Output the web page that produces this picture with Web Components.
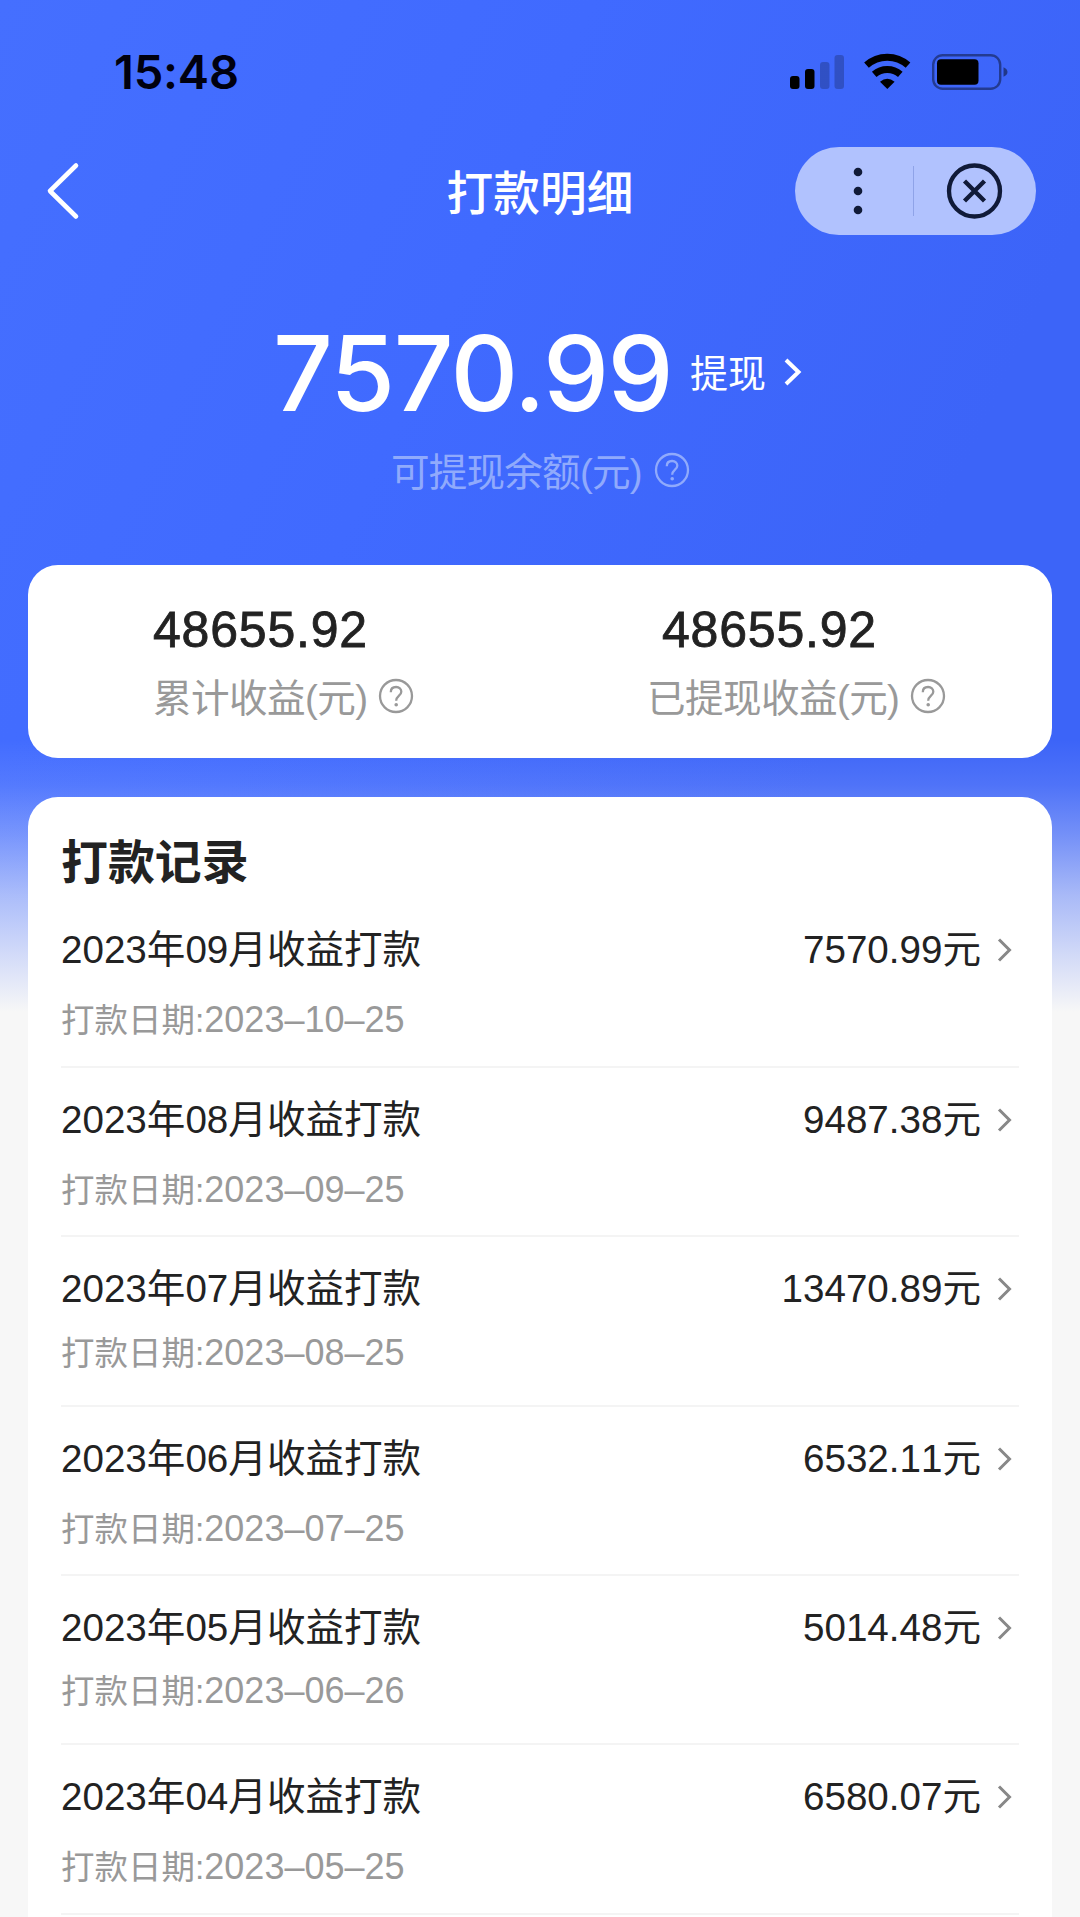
<!DOCTYPE html>
<html lang="zh-CN">
<head>
<meta charset="UTF-8">
<title>打款明细</title>
<style>
    body{
        margin: 0;
        width: 1080px;
        height: 1917px;
        overflow: hidden;
        background-color: #f7f7f7;
        font-family: "Liberation Sans", "Noto Sans CJK SC", sans-serif;
        font-kerning: none;
        color: #222;
    }
</style>
</head>
<body>
<pagina-pagos>
    <barra-estado hora="15:48"></barra-estado>
    <barra-titulo>打款明细</barra-titulo>
    <saldo-disponible>
        <span slot="monto">7570.99</span>
        <span slot="accion">提现</span>
        <span slot="detalle">可提现余额(元)</span>
    </saldo-disponible>
    <tarjeta-resumen>
        <dato-resumen>
            <span slot="valor">48655.92</span>
            <span slot="etiqueta">累计收益(元)</span>
        </dato-resumen>
        <dato-resumen class="derecha">
            <span slot="valor">48655.92</span>
            <span slot="etiqueta">已提现收益(元)</span>
        </dato-resumen>
    </tarjeta-resumen>
    <lista-pagos>
        <span slot="titulo">打款记录</span>
        <fila-pago mes="2023年09月" monto="7570.99" fecha="2023–10–25"></fila-pago>
        <fila-pago mes="2023年08月" monto="9487.38" fecha="2023–09–25"></fila-pago>
        <fila-pago mes="2023年07月" monto="13470.89" fecha="2023–08–25" junto></fila-pago>
        <fila-pago mes="2023年06月" monto="6532.11" fecha="2023–07–25"></fila-pago>
        <fila-pago mes="2023年05月" monto="5014.48" fecha="2023–06–26" junto></fila-pago>
        <fila-pago mes="2023年04月" monto="6580.07" fecha="2023–05–25"></fila-pago>
    </lista-pagos>
</pagina-pagos>

<script>
class Componente extends HTMLElement{
    constructor(){
        super()
        this.attachShadow({ mode: "open" });
    }
    connectedCallback(){
        const template = document.createElement("template");
        template.innerHTML = this.getTemplate() + this.getStyles();
        this.shadowRoot.replaceChildren(template.content.cloneNode(true));
    }
}

class PaginaPagos extends Componente{
    getTemplate() {
        return `<slot></slot>`;
    }
    getStyles() {
    return `
        <style>
            :host{
                display: flex;
                flex-direction: column;
                height: 1917px;
                background:
                    linear-gradient(rgba(247,247,247,0) 740px, rgba(247,247,247,.1) 785px, rgba(247,247,247,.3) 835px, rgba(247,247,247,.58) 895px, rgba(247,247,247,.8) 955px, #f7f7f7 1012px),
                    linear-gradient(115deg, #456fff 0%, #406aff 30%, #3c64f8 60%);
            }
        </style>
    `;
    }
}

class BarraEstado extends Componente{
    getTemplate() {
        return `
            <span class="hora">${this.getAttribute("hora")}</span>
            <svg width="220" height="40" viewBox="0 0 220 40">
                <!-- señal -->
                <rect x="2" y="24" width="9.500" height="13" rx="3"/>
                <rect x="17" y="17" width="9.500" height="20" rx="3"/>
                <rect x="32" y="10" width="9.500" height="27" rx="3" opacity=".22"/>
                <rect x="46.500" y="3" width="9.500" height="34" rx="3" opacity=".22"/>
                <!-- wifi -->
                <g fill="none" stroke="#000" stroke-width="7">
                    <path d="M78.500 13.200A31 31 0 0 1 120 13.200"/>
                    <path d="M86.200 22.400A20 20 0 0 1 112.300 22.400"/>
                </g>
                <path d="M99.300 37L92 29.800Q99.300 23.800 106.600 29.800Z"/>
                <!-- bateria -->
                <rect x="145.200" y="3.200" width="67" height="33.600" rx="9.500" fill="none" stroke="#000" stroke-width="2.400" opacity=".42"/>
                <rect x="149" y="7.200" width="41.500" height="25.500" rx="4"/>
                <path d="M215.500 15.200Q219.500 17 219.500 20T215.500 24.800Z" opacity=".45"/>
            </svg>
        `;
    }
    getStyles() {
    return `
        <style>
            :host{
                display: flex;
                justify-content: space-between;
                align-items: center;
                height: 36px;
                padding: 54px 72px 0 114px;
                color: #00000f;
            }
            .hora{
                font: 600 47px/36px Inter, sans-serif;
                letter-spacing: -.2px;
            }
        </style>
    `;
    }
}

class BarraTitulo extends Componente{
    getTemplate() {
        return `
            <svg class="volver" width="40" height="64" viewBox="0 0 40 64">
                <path d="M32 6.500L6 32L32 57.500" fill="none" stroke="#fff" stroke-width="4.600" stroke-linecap="round" stroke-linejoin="round"/>
            </svg>
            <span class="titulo"><slot></slot></span>
            <div class="capsula">
                <svg width="241" height="88" viewBox="0 0 241 88" fill="#101a38">
                    <circle cx="63" cy="25" r="4.300"/>
                    <circle cx="63" cy="44" r="4.300"/>
                    <circle cx="63" cy="63" r="4.300"/>
                    <path d="M118.500 19V69" stroke="#8fa3e8" stroke-width="1"/>
                    <circle cx="179.500" cy="44" r="25.500" fill="none" stroke="#101a38" stroke-width="4.300"/>
                    <path d="M169.500 34L189.500 54M189.500 34L169.500 54" stroke="#101a38" stroke-width="4.400"/>
                </svg>
            </div>
        `;
    }
    getStyles() {
    return `
        <style>
            :host{
                display: grid;
                grid-template-columns: 1fr auto 1fr;
                align-items: center;
                height: 88px;
                margin-top: 57px;
                padding: 0 44px;
                color: #fff;
            }
            .titulo{
                padding-top: 5px;
                font-size: 46.7px;
                font-weight: 500;
                line-height: 60px;
            }
            .capsula{
                justify-self: end;
                width: 241px;
                height: 88px;
                border-radius: 44px;
                background-color: #b1c2fe;
            }
        </style>
    `;
    }
}

class IconoAyuda extends Componente{
    getTemplate() {
        return `
            <svg width="36" height="36" viewBox="0 0 36 36" fill="none" stroke="currentColor" stroke-width="2.300">
                <circle cx="18" cy="18" r="16"/>
                <path d="M12.800 14.200C12.800 10.800 15 9 18.100 9S23.300 11 23.300 13.700C23.300 17.500 18.200 17.800 18.200 22.700"/>
                <circle cx="18.200" cy="26.800" r="1.800" fill="currentColor" stroke="none"/>
            </svg>
        `;
    }
    getStyles() {
    return `
        <style>
            :host{
                display: block;
                height: 36px;
            }
            svg{
                display: block;
            }
        </style>
    `;
    }
}

class SaldoDisponible extends Componente{
    getTemplate() {
        return `
            <div class="saldo">
                <span class="monto"><slot name="monto"></slot></span>
                <span class="accion"><slot name="accion"></slot></span>
                <svg width="20" height="32" viewBox="0 0 20 32">
                    <path d="M3 4L15.500 16L3 28" fill="none" stroke="#fff" stroke-width="4"/>
                </svg>
            </div>
            <div class="detalle">
                <slot name="detalle"></slot>
                <icono-ayuda></icono-ayuda>
            </div>
        `;
    }
    getStyles() {
    return `
        <style>
            :host{
                display: flex;
                flex-direction: column;
                height: 330px;
                color: #fff;
            }
            .saldo{
                display: flex;
                align-items: center;
                height: 120px;
                margin-top: 77px;
                padding-left: 273px;
            }
            .monto{
                width: 417px;
                padding-top: 1px;
                font: 500 105px/120px Inter, sans-serif;
                letter-spacing: -1.6px;
                white-space: nowrap;
            }
            .accion{
                width: 93px;
                padding-top: 3px;
                font-size: 38px;
                line-height: 50px;
            }
            .detalle{
                display: flex;
                align-items: center;
                gap: 12px;
                height: 50px;
                margin-top: 13px;
                padding-left: 391px;
                font-size: 38.6px;
                letter-spacing: -.8px;
                color: #90aafc;
            }
            .detalle slot{
                display: block;
                padding-bottom: 3px;
            }
        </style>
    `;
    }
}

class TarjetaResumen extends Componente{
    getTemplate() {
        return `<slot></slot>`;
    }
    getStyles() {
    return `
        <style>
            :host{
                display: grid;
                grid-template-columns: 1fr 1fr;
                height: 193px;
                margin: 0 28px;
                border-radius: 30px;
                background-color: #fff;
            }
            ::slotted(dato-resumen){
                padding-left: 125px;
            }
            ::slotted(.derecha){
                padding-left: 107px;
                --sangria: 15px;
            }
        </style>
    `;
    }
}

class DatoResumen extends Componente{
    getTemplate() {
        return `
            <div class="valor"><slot name="valor"></slot></div>
            <div class="etiqueta">
                <slot name="etiqueta"></slot>
                <icono-ayuda></icono-ayuda>
            </div>
        `;
    }
    getStyles() {
    return `
        <style>
            :host{
                display: flex;
                flex-direction: column;
                padding-top: 35px;
            }
            .valor{
                padding-left: var(--sangria, 0);
                font-size: 50px;
                line-height: 60px;
                letter-spacing: .8px;
                -webkit-text-stroke: .8px #222;
            }
            .etiqueta{
                display: flex;
                align-items: center;
                gap: 11px;
                height: 50px;
                margin-top: 11px;
                font-size: 38.6px;
                letter-spacing: -.6px;
                color: #999;
            }
            .etiqueta slot{
                display: block;
                padding-bottom: 3px;
            }
        </style>
    `;
    }
}

class ListaPagos extends Componente{
    getTemplate() {
        return `
            <div class="titulo"><slot name="titulo"></slot></div>
            <slot></slot>
        `;
    }
    getStyles() {
    return `
        <style>
            :host{
                display: flex;
                flex-direction: column;
                flex: 1;
                margin: 39px 28px 0;
                padding: 0 33px;
                border-radius: 30px 30px 0 0;
                background-color: #fff;
            }
            .titulo{
                height: 60px;
                padding: 36px 0 5.400px;
                font-size: 46.9px;
                font-weight: 700;
                line-height: 60px;
            }
        </style>
    `;
    }
}

class FilaPago extends Componente{
    getTemplate() {
        return `
            <div class="pago">
                <span>${this.getAttribute("mes")}收益打款</span>
                <span class="monto">${this.getAttribute("monto")}元</span>
                <svg width="18" height="28" viewBox="0 0 18 28">
                    <path d="M3 3.500L13.500 14L3 24.500" fill="none" stroke="#888" stroke-width="3"/>
                </svg>
            </div>
            <div class="fecha">打款日期:<span>${this.getAttribute("fecha")}</span></div>
        `;
    }
    getStyles() {
    return `
        <style>
            :host{
                display: block;
                box-sizing: border-box;
                flex: none;
                height: 169.4px;
                padding-top: 27px;
                border-bottom: 2px solid #f4f4f4;
            }
            .pago{
                display: flex;
                align-items: center;
                height: 50px;
                padding-right: 5px;
                font-size: 38.6px;
                line-height: 50px;
            }
            .monto{
                margin-left: auto;
                margin-right: 15px;
            }
            .fecha{
                margin-top: 22px;
                font-size: 33.5px;
                line-height: 46px;
                color: #999;
            }
            .fecha span{
                font-size: 36px;
            }
            :host([junto]) .fecha{
                margin-top: 15.500px;
            }
        </style>
    `;
    }
}

customElements.define("pagina-pagos", PaginaPagos);
customElements.define("barra-estado", BarraEstado);
customElements.define("barra-titulo", BarraTitulo);
customElements.define("icono-ayuda", IconoAyuda);
customElements.define("saldo-disponible", SaldoDisponible);
customElements.define("tarjeta-resumen", TarjetaResumen);
customElements.define("dato-resumen", DatoResumen);
customElements.define("lista-pagos", ListaPagos);
customElements.define("fila-pago", FilaPago);
</script>
</body>
</html>
